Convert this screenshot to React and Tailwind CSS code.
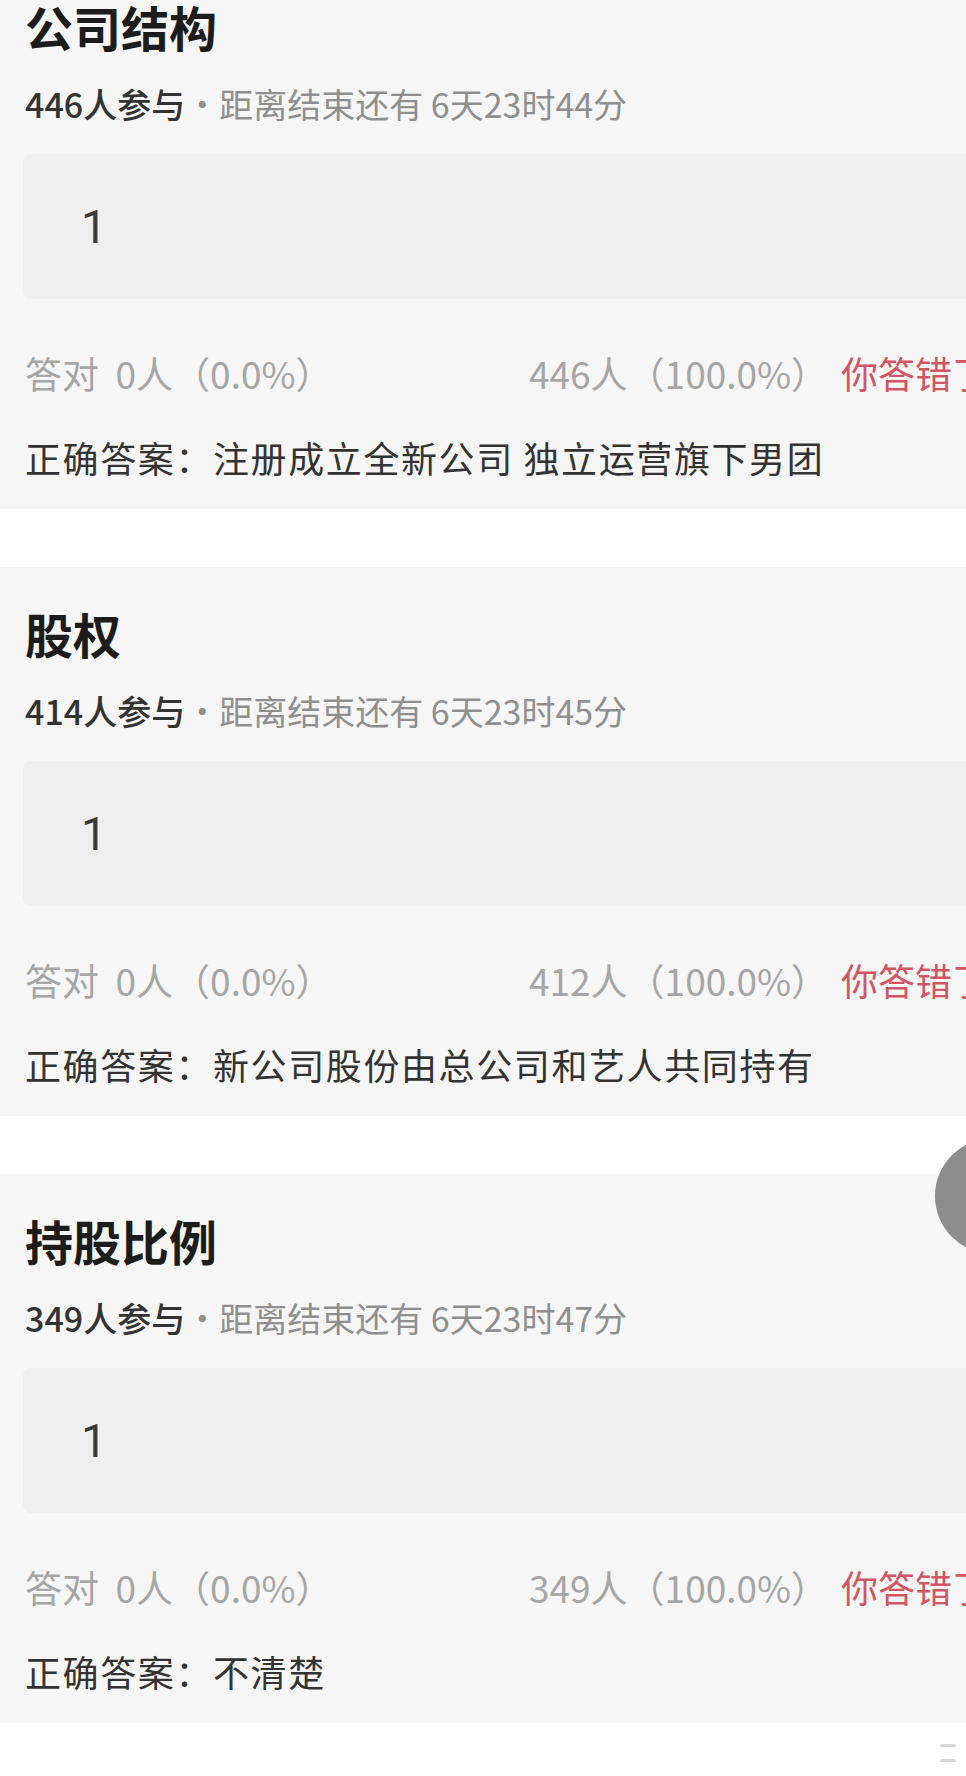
import React from 'react';

const polls = [
  {
    title: '公司结构',
    joined: 446,
    remain: '6天23时44分',
    wrong: 446,
    answer: '注册成立全新公司 独立运营旗下男团',
  },
  {
    title: '股权',
    joined: 414,
    remain: '6天23时45分',
    wrong: 412,
    answer: '新公司股份由总公司和艺人共同持有',
  },
  {
    title: '持股比例',
    joined: 349,
    remain: '6天23时47分',
    wrong: 349,
    answer: '不清楚',
  },
];

function PollCard({ poll }) {
  return (
    <div className="h-[549px] bg-[#f6f6f6] pl-[25px] pt-[42px] pb-[28px] flex flex-col">
      <h2 className="text-[48px] leading-none font-bold text-[#1c1c1c]">{poll.title}</h2>

      <p className="mt-[33px] text-[34px] leading-[41px] whitespace-nowrap">
        <span className="font-medium text-[#333333]">{poll.joined}人参与</span>
        <span className="text-[#8f8f8f]">·距离结束还有 {poll.remain}</span>
      </p>

      <div className="mt-[30px] -ml-[2px] h-[145px] bg-[#efefef] rounded-l-lg flex items-center pl-[58px]">
        <span className="font-['Roboto',sans-serif] text-[46px] text-[#3a3a3a] leading-none">1</span>
      </div>

      <div className="mt-[52px] grid grid-cols-[504px_312px_auto] text-[37px] leading-[44px] whitespace-nowrap">
        <span className="text-[#a6a6a6]">答对&nbsp;&nbsp;0人（0.0%）</span>
        <span className="text-[#a6a6a6]">{poll.wrong}人（100.0%）</span>
        <span className="text-[#d25563]">你答错了</span>
      </div>

      <p className="mt-[41px] text-[36px] leading-[43px] tracking-[1.6px] text-[#333333] whitespace-nowrap">
        正确答案：{poll.answer}
      </p>
    </div>
  );
}

export default function App() {
  return (
    <div className="relative w-[966px] h-[1776px] overflow-hidden bg-white font-['Noto_Sans_CJK_SC','Noto_Sans',sans-serif]">
      <div className="-mt-[40px] flex flex-col gap-[58px]">
        {polls.map((poll) => (
          <PollCard key={poll.title} poll={poll} />
        ))}
      </div>

      {/* floating button, mostly off screen */}
      <div className="absolute left-[935px] top-[1138px] w-[116px] h-[116px] rounded-full bg-[#8d8d8d]" />

      {/* little marks bottom right */}
      <div className="absolute left-[940px] top-[1744px] w-[16px] h-[3px] rounded-full bg-[#d6d6d6]" />
      <div className="absolute left-[940px] top-[1759px] w-[16px] h-[3px] rounded-full bg-[#d6d6d6]" />
    </div>
  );
}
